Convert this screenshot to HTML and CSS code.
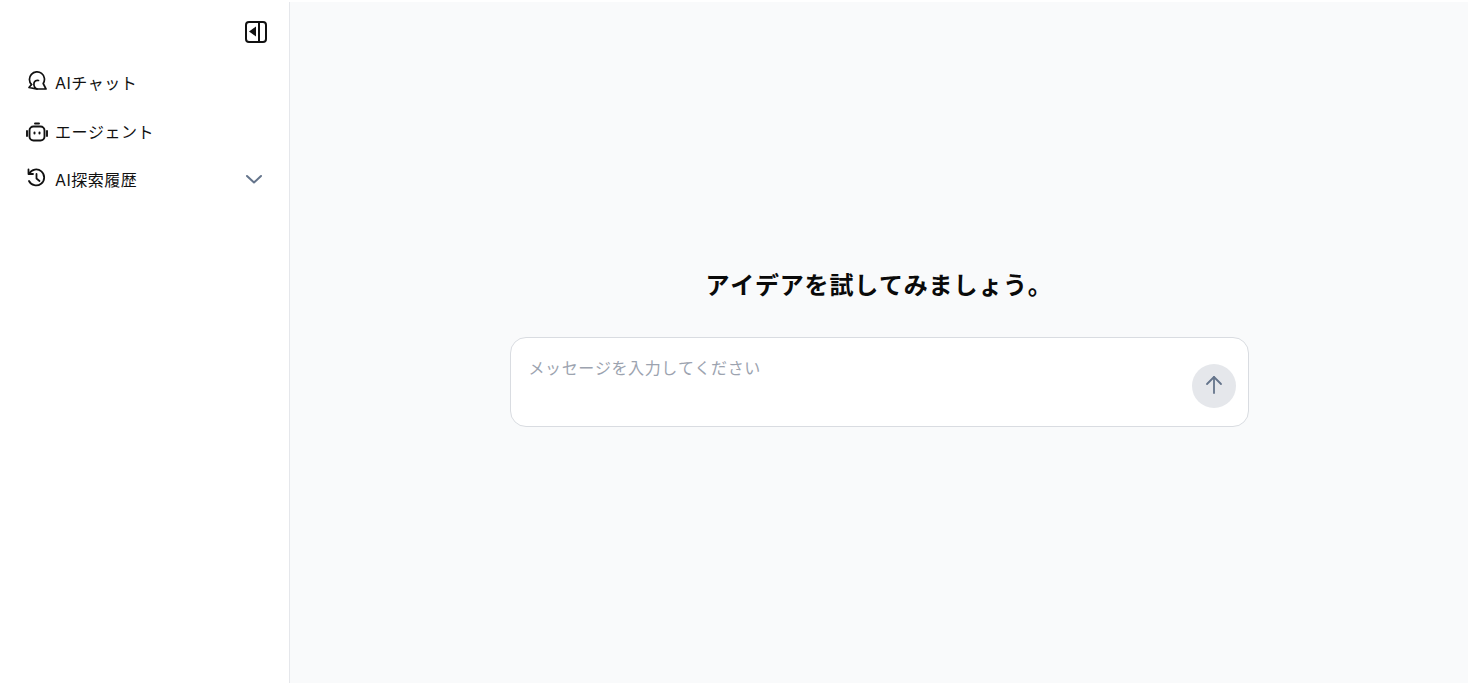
FILE: index.html
```html
<!doctype html>
<html lang="ja">
    <head>
        <meta charset="utf-8">
        <meta name="viewport" content="width=device-width, initial-scale=1">
        <title>AIチャット</title>
        <link rel="stylesheet" href="styles.css">
    </head>
    <body>
        <div class="app">
            <aside class="sidebar">
                <div class="sidebar-top">
                    <button class="collapse" type="button" aria-label="閉じる">
                        <svg width="22" height="22" viewBox="0 0 22 22" fill="none" stroke="#111" stroke-width="2">
                            <rect x="1" y="1" width="20" height="20" rx="3"/>
                            <path d="M14 1v20"/>
                            <path d="M11 5.500v10L4 10.500z" fill="#111" stroke="none"/>
                        </svg>
                    </button>
                </div>
                <ul class="menu">
                    <li class="menu-item">
                        <svg class="icon icon-chat" width="22" height="20" viewBox="0 0 22 20" fill="none" stroke="#111" stroke-width="1.700" stroke-linejoin="round" stroke-linecap="round">
                            <path d="M5.500 13.500A7.500 7.500 0 1 1 17.200 12.500L20 18H11"/>
                            <path d="M5.500 13.500 3 16.500c2.500.7 5 1 8 1.500-2-1-3.500-3-3-6 .4-2 2.500-3 4.500-2.500"/>
                        </svg>
                        <span>AIチャット</span>
                    </li>
                    <li class="menu-item">
                        <svg class="icon icon-bot" width="22" height="20" viewBox="0 0 22 20" fill="none" stroke="#111" stroke-width="1.900" stroke-linecap="round">
                            <rect x="3.500" y="4.500" width="15" height="14" rx="4"/>
                            <path d="M9 1.500h4"/>
                            <path d="M1 9v5M21 9v5"/>
                            <path d="M8.500 10.500v1M13.500 10.500v1" stroke-width="2"/>
                        </svg>
                        <span>エージェント</span>
                    </li>
                    <li class="menu-item menu-item-history">
                        <svg class="icon icon-history" width="20" height="20" viewBox="0 0 20 20" fill="none" stroke="#111" stroke-width="1.800" stroke-linecap="round" stroke-linejoin="round">
                            <path d="M3.200 5.500A8 8 0 1 1 3 13"/>
                            <path d="M2.500 1.500v4.500H7"/>
                            <path d="M10.500 6v4.500l3 2.500"/>
                        </svg>
                        <span>AI探索履歴</span>
                        <svg class="chevron" width="18" height="10" viewBox="0 0 18 10" fill="none" stroke="#64748b" stroke-width="2" stroke-linecap="round" stroke-linejoin="round">
                            <path d="M2 2l7 6.500L16 2"/>
                        </svg>
                    </li>
                </ul>
            </aside>
            <main class="main">
                <h1 class="title">アイデアを試してみましょう。</h1>
                <form class="composer">
                    <textarea class="composer-input" placeholder="メッセージを入力してください"></textarea>
                    <button class="send" type="button" aria-label="送信">
                        <svg width="18" height="20" viewBox="0 0 18 20" fill="none" stroke="#64748b" stroke-width="1.800" stroke-linecap="round" stroke-linejoin="round">
                            <path d="M9 18V2"/>
                            <path d="M2 9l7-7 7 7"/>
                        </svg>
                    </button>
                </form>
            </main>
        </div>
    </body>
</html>
```

FILE: styles.css
```css
* {
    box-sizing: border-box;
}

body {
    margin: 0;
    padding: 0;
    background-color: white;
    font-family: Inter, "Noto Sans CJK JP", sans-serif;
    font-kerning: none;
    color: #111;
}

.app {
    display: flex;
    height: 681px;
    margin-top: 2px;
}

.sidebar {
    width: 290px;
    flex-shrink: 0;
    border-right: 1px solid #e5e7eb;
    background-color: white;
}

.sidebar-top {
    display: flex;
    justify-content: flex-end;
    padding: 19px 22px 0 0;
}

.collapse {
    display: block;
    width: 22px;
    height: 22px;
    padding: 0;
    border: none;
    background: none;
}

.collapse svg {
    display: block;
}

.menu {
    list-style: none;
    margin: 0;
    padding: 15px 0 0 0;
}

.menu-item {
    display: flex;
    align-items: center;
    height: 48.500px;
    padding-left: 26px;
    font-size: 16px;
    letter-spacing: 0.5px;
    color: #111;
}

.menu-item span {
    margin-left: 9px;
}

.icon {
    flex-shrink: 0;
    margin-top: -2px;
}

.icon-chat + span,
.icon-bot + span {
    margin-left: 7px;
}

.icon-bot {
    margin-top: 3px;
}

.chevron {
    margin-left: auto;
    margin-right: 26px;
}

.main {
    flex: 1;
    display: flex;
    flex-direction: column;
    align-items: center;
    background-color: #f9fafb;
    padding-top: 267px;
}

.title {
    margin: 0;
    font-size: 24px;
    line-height: 34px;
    font-weight: 600;
    letter-spacing: 0.8px;
    color: #0a0a0a;
}

.composer {
    position: relative;
    width: 739px;
    height: 90px;
    margin-top: 34px;
    border: 1px solid #d9dce1;
    border-radius: 16px;
    background-color: white;
}

.composer-input {
    display: block;
    width: 100%;
    height: 100%;
    padding: 18px 60px 0 18px;
    border: none;
    border-radius: 16px;
    background: transparent;
    outline: none;
    resize: none;
    font-family: inherit;
    font-kerning: none;
    font-size: 16px;
    line-height: 24px;
    letter-spacing: 0.6px;
}

.composer-input::placeholder {
    color: #9ca3af;
    opacity: 1;
}

.send {
    position: absolute;
    right: 12px;
    bottom: 18px;
    display: flex;
    align-items: center;
    justify-content: center;
    width: 44px;
    height: 44px;
    padding: 0 0 2px;
    border: none;
    border-radius: 50%;
    background-color: #e5e7eb;
}
```
